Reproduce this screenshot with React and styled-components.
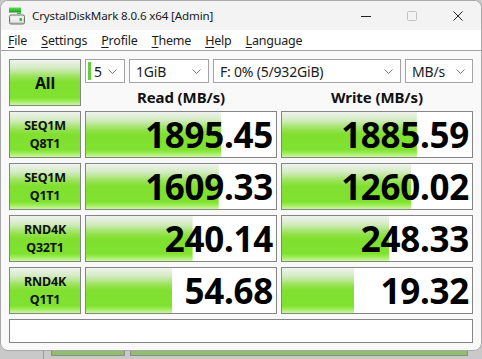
import React from 'react';
import styled, { createGlobalStyle } from 'styled-components';

const Global = createGlobalStyle`
  html, body { margin: 0; padding: 0; }
  body {
    width: 482px; height: 359px; overflow: hidden;
    background: #c8c8c8;
    font-family: "Noto Sans", "DejaVu Sans", sans-serif;
    color: #111;
  }
`;

const GREEN = `linear-gradient(to bottom, #f1f2f0 0%, #d3ebc2 18%, #98e256 38%, #80df2f 50%, #80e230 84%, #a6ee68 93%, #c8f79c 100%)`;

const Window = styled.div`
  width: 482px; height: 351px; box-sizing: border-box;
  border: 1px solid #a9a9a9; border-radius: 8px; overflow: hidden;
  background: #f9f9f9;
  display: flex; flex-direction: column;
`;

const TitleBar = styled.div`
  height: 29px; flex: none; display: flex; align-items: center;
  background: #f3f3f3;
`;

const AppIcon = styled.svg`
  margin-left: 7px; width: 17px; height: 18px; flex: none;
`;

const Title = styled.div`
  margin-left: 7px; font-size: 11.6px; color: #1b1b1b; flex: 1;
  letter-spacing: -0.15px;
`;

const Caption = styled.div`
  width: 46px; height: 29px; display: flex; align-items: center; justify-content: center;
`;

const MenuBar = styled.div`
  height: 20px; flex: none; display: flex; align-items: center;
  background: #ffffff; border-bottom: 1px solid #a0a0a0;
`;

const MenuItem = styled.div`
  font-size: 12.5px; padding: 1px 7px 0; color: #1b1b1b; line-height: 19px;
  letter-spacing: -0.2px;
  & u { text-decoration-thickness: 1px; text-underline-offset: 2px; }
`;

const Content = styled.div`
  flex: 1; padding: 8px 8px 0 8px;
  display: grid;
  grid-template-columns: 72px 192px 192px;
  grid-auto-rows: 47px;
  column-gap: 4px; row-gap: 5px;
  align-content: start;
`;

const GreenButton = styled.div`
  box-sizing: border-box; border: 1px solid #858585;
  background: ${GREEN};
  display: flex; flex-direction: column; align-items: center; justify-content: center;
  font-weight: 700; color: #111;
  font-size: ${p => (p.$big ? '16px' : '12.5px')};
  line-height: ${p => (p.$big ? '20px' : '18px')};
  letter-spacing: -0.2px;
`;

const TopPanel = styled.div`
  grid-column: 2 / span 2;
  display: flex; flex-direction: column;
`;

const ComboRow = styled.div`
  display: flex; gap: 4px; height: 24px;
`;

const Combo = styled.div`
  box-sizing: border-box; width: ${p => p.$w}px; height: 24px;
  border: 1px solid #a4a4a4; background: #fff;
  display: flex; align-items: center;
  padding: 0 7px 0 ${p => (p.$marked ? '1px' : '6px')};
  font-size: 14px; color: #1b1b1b;
  letter-spacing: -0.2px;
`;

const Mark = styled.div`
  width: 3px; height: 18px; background: #5fd03a; margin-right: 3px; margin-left: 1px;
`;

const ComboText = styled.span`
  flex: 1;
`;

const HeaderRow = styled.div`
  flex: 1; display: grid; grid-template-columns: 192px 192px; column-gap: 4px;
  align-items: center;
`;

const Header = styled.div`
  text-align: center; font-weight: 700; font-size: 15px; color: #111;
  padding-top: 4px; letter-spacing: -0.1px;
`;

const ValueBox = styled.div`
  box-sizing: border-box; border: 1px solid #858585;
  background-color: #fff;
  background-image: ${GREEN};
  background-repeat: no-repeat;
  display: flex; align-items: center; justify-content: flex-end;
  padding-right: 3px;
  font-weight: 700; font-size: 35px; color: #000;
  letter-spacing: -0.3px;
`;

const Comment = styled.div`
  grid-column: 1 / span 3;
  height: 24px; box-sizing: border-box;
  border: 1px solid #858585; background: #fff;
`;

const Behind = styled.div`
  height: 8px; display: flex; align-items: flex-start;
  background: #c9c9c9;
`;

const BehindLine = styled.div`
  width: 1px; height: 8px; background: #9c9c9c; margin-left: 43px; margin-right: 7px;
`;

const BehindBar = styled.div`
  width: ${p => p.$w}px; height: 4px; margin-right: 5px;
  background: #8fbe6c; border: 1px solid #8a8a8a; border-top: none;
`;

const Chevron = () => (
  <svg width="9" height="5" viewBox="0 0 9 5">
    <path d="M0.5 0.5 L4.5 4.5 L8.5 0.5" fill="none" stroke="#7a7a7a" strokeWidth="1" />
  </svg>
);

const rows = [
  ['SEQ1M', 'Q8T1', 1895.45, 1885.59],
  ['SEQ1M', 'Q1T1', 1609.33, 1260.02],
  ['RND4K', 'Q32T1', 240.14, 248.33],
  ['RND4K', 'Q1T1', 54.68, 19.32],
];

const fill = v => Math.max(0, Math.min(190, 31.4 + 31.6 * Math.log10(v)));

const Value = ({ v }) => (
  <ValueBox style={{ backgroundSize: `${fill(v).toFixed(1)}px 100%` }}>
    {v.toFixed(2)}
  </ValueBox>
);

const menus = ['File', 'Settings', 'Profile', 'Theme', 'Help', 'Language'];

export default function App() {
  return (
    <>
      <Global />
      <Window>
        <TitleBar>
          <AppIcon viewBox="0 0 17 18">
            <defs>
              <linearGradient id="gb" x1="0" y1="0" x2="0" y2="1">
                <stop offset="0" stopColor="#5fe04a" />
                <stop offset="1" stopColor="#1a9a2a" />
              </linearGradient>
              <linearGradient id="db" x1="0" y1="0" x2="0" y2="1">
                <stop offset="0" stopColor="#f4f4f4" />
                <stop offset="1" stopColor="#c4c4c4" />
              </linearGradient>
            </defs>
            <rect x="1" y="0.5" width="12" height="5" fill="url(#gb)" />
            <rect x="9" y="5.5" width="4" height="1.5" fill="#3fbf3a" />
            <rect x="1.5" y="8" width="15" height="9" rx="1.5" fill="url(#db)" stroke="#707070" />
            <rect x="3" y="10" width="12" height="5" fill="#ffffff" opacity="0.5" />
            <rect x="11.5" y="11" width="2.5" height="3" fill="#36c03a" />
          </AppIcon>
          <Title>CrystalDiskMark 8.0.6 x64 [Admin]</Title>
          <Caption>
            <svg width="10" height="10" viewBox="0 0 10 10"><path d="M0 5.5 H10" stroke="#222" strokeWidth="1" /></svg>
          </Caption>
          <Caption>
            <svg width="10" height="10" viewBox="0 0 10 10"><rect x="0.5" y="0.5" width="9" height="9" rx="1" fill="none" stroke="#c2c2c2" /></svg>
          </Caption>
          <Caption>
            <svg width="10" height="10" viewBox="0 0 10 10"><path d="M0.5 0.5 L9.5 9.5 M9.5 0.5 L0.5 9.5" stroke="#222" strokeWidth="1" /></svg>
          </Caption>
        </TitleBar>
        <MenuBar>
          {menus.map(m => (
            <MenuItem key={m}><u>{m[0]}</u>{m.slice(1)}</MenuItem>
          ))}
        </MenuBar>
        <Content>
          <GreenButton $big>All</GreenButton>
          <TopPanel>
            <ComboRow>
              <Combo $w={40} $marked><Mark /><ComboText>5</ComboText><Chevron /></Combo>
              <Combo $w={80}><ComboText>1GiB</ComboText><Chevron /></Combo>
              <Combo $w={188}><ComboText>F: 0% (5/932GiB)</ComboText><Chevron /></Combo>
              <Combo $w={68}><ComboText>MB/s</ComboText><Chevron /></Combo>
            </ComboRow>
            <HeaderRow>
              <Header>Read (MB/s)</Header>
              <Header>Write (MB/s)</Header>
            </HeaderRow>
          </TopPanel>
          {rows.map(([a, b, r, w]) => (
            <React.Fragment key={a + b}>
              <GreenButton><span>{a}</span><span>{b}</span></GreenButton>
              <Value v={r} />
              <Value v={w} />
            </React.Fragment>
          ))}
          <Comment />
        </Content>
      </Window>
      <Behind>
        <BehindLine />
        <BehindBar $w={72} />
        <BehindBar $w={336} />
      </Behind>
    </>
  );
}
